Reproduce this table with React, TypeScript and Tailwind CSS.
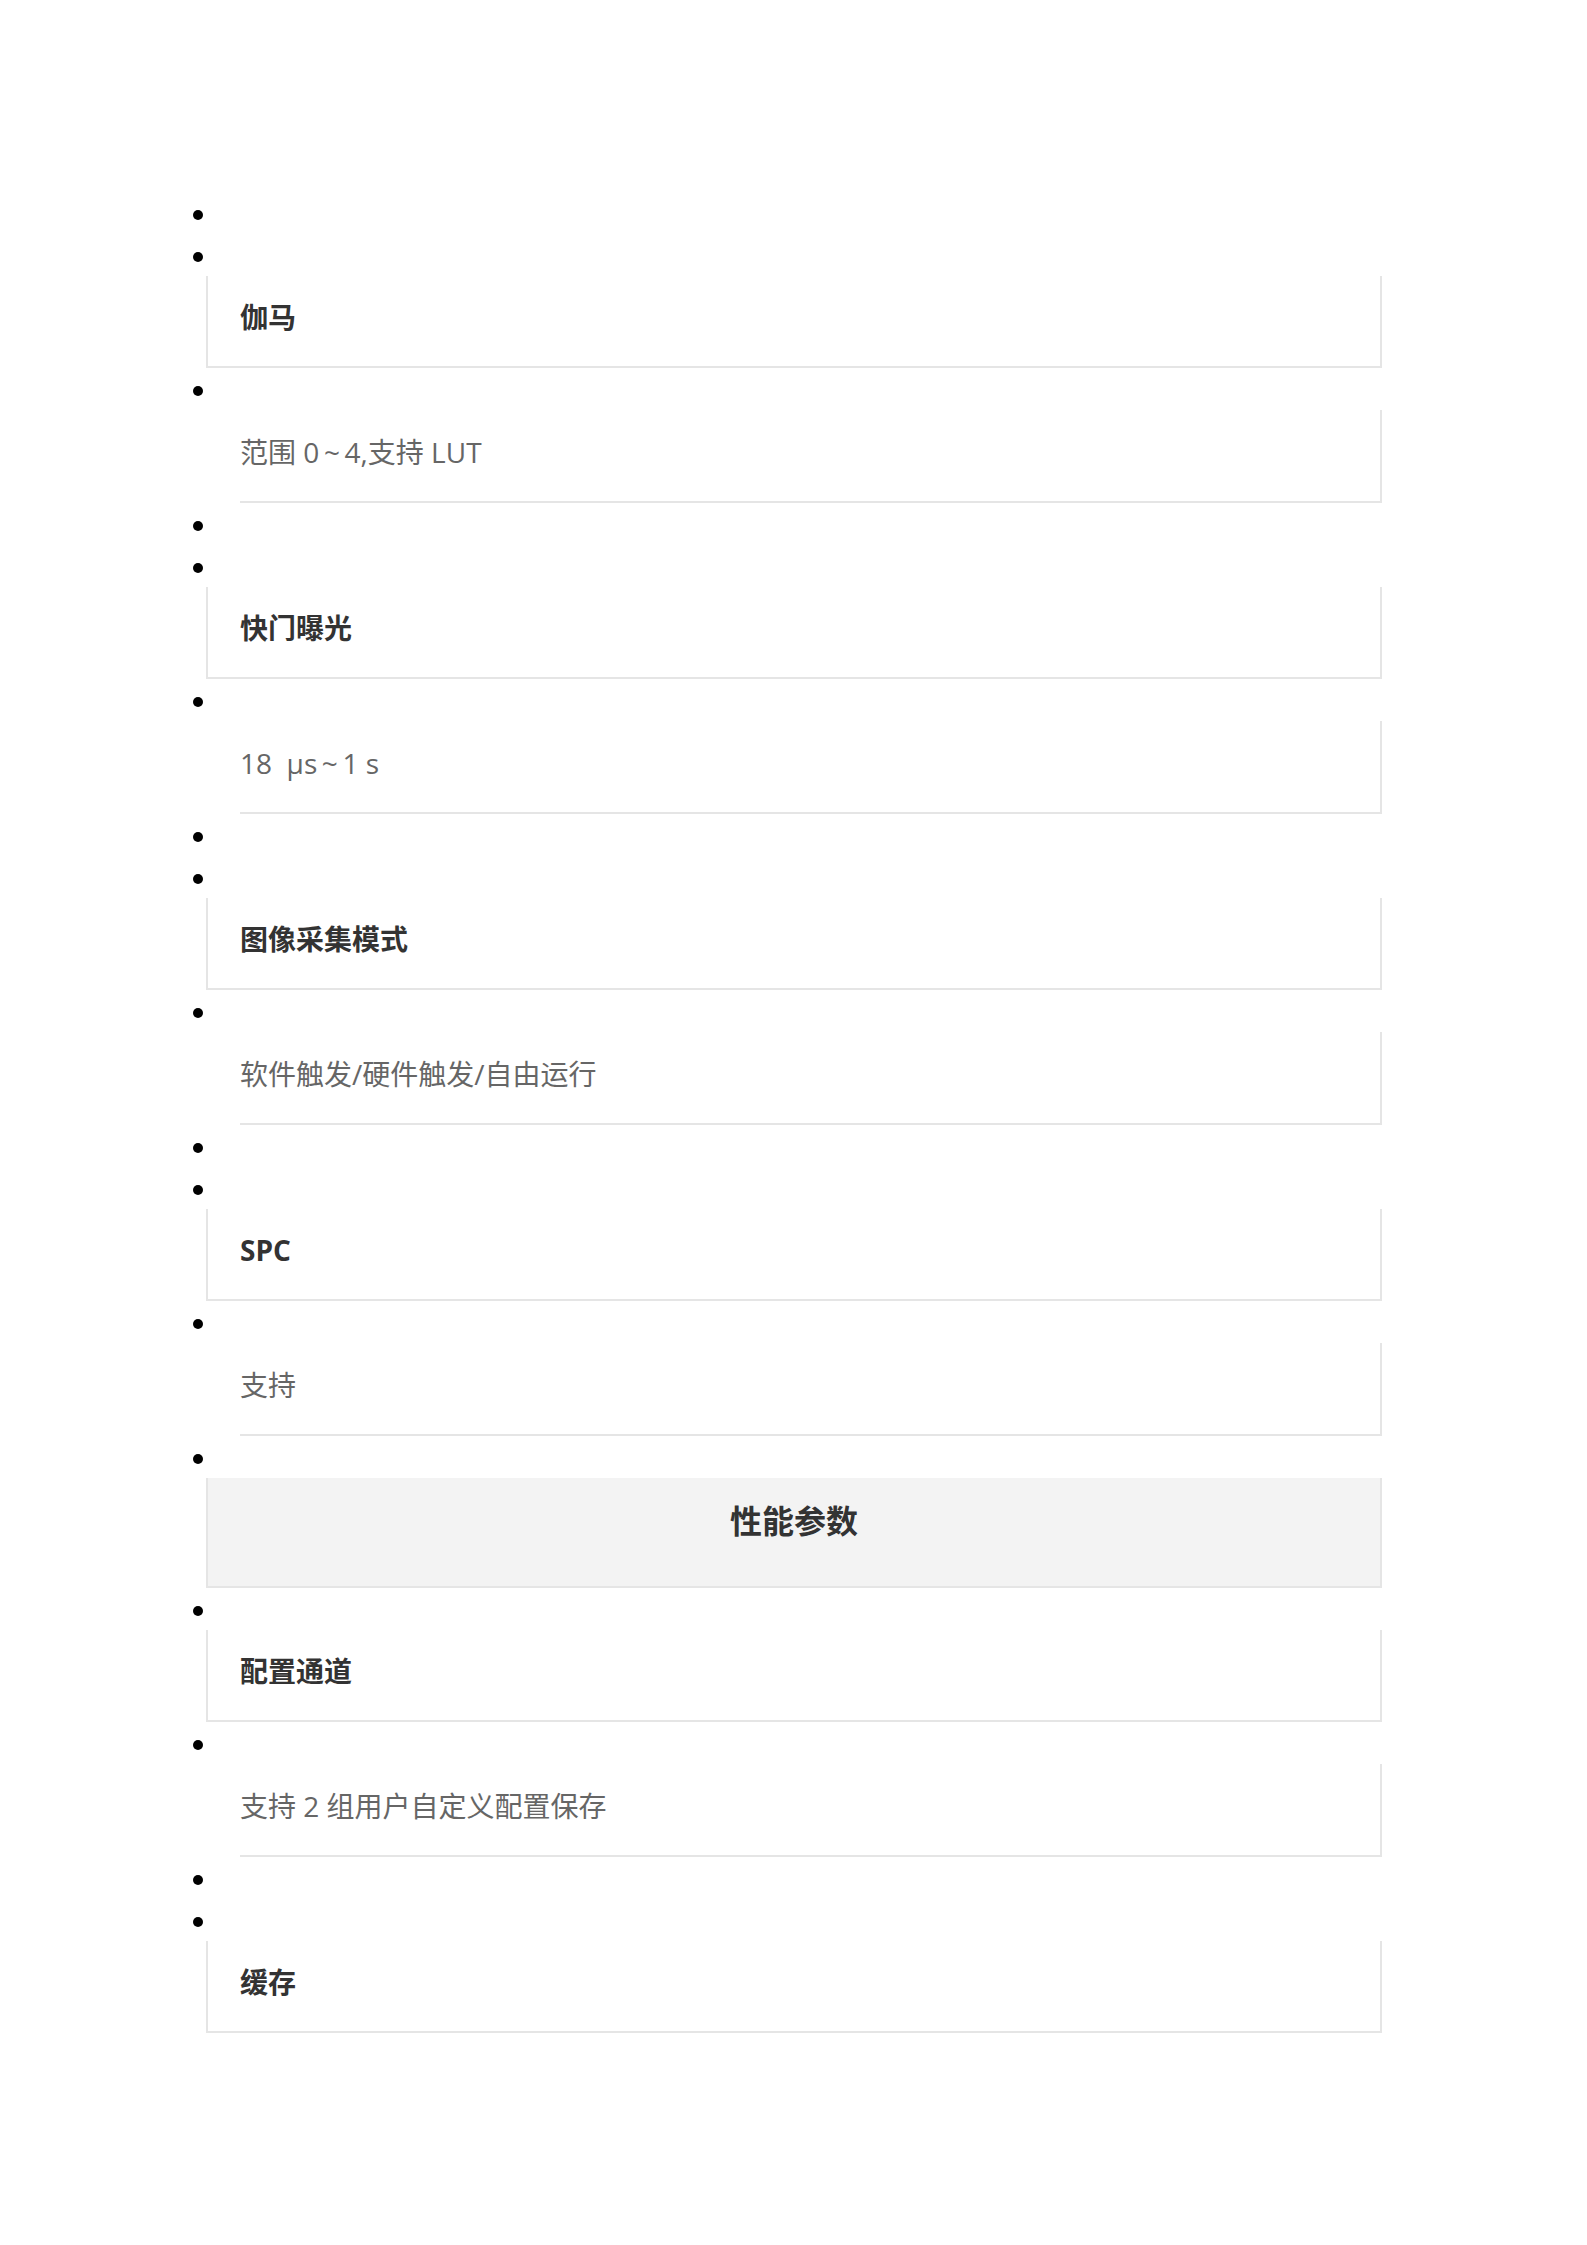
import React from 'react';

type Row =
  | { kind: 'empty' }
  | { kind: 'title'; text: string }
  | { kind: 'value'; text: string }
  | { kind: 'header'; text: string };

const rows: Row[] = [
  { kind: 'empty' },
  { kind: 'title', text: '伽马' },
  { kind: 'value', text: '范围 0\u2009~\u20094,支持 LUT' },
  { kind: 'empty' },
  { kind: 'title', text: '快门曝光' },
  { kind: 'value', text: '18 \u00a0μs\u2009~\u20091 s' },
  { kind: 'empty' },
  { kind: 'title', text: '图像采集模式' },
  { kind: 'value', text: '软件触发/硬件触发/自由运行' },
  { kind: 'empty' },
  { kind: 'title', text: 'SPC' },
  { kind: 'value', text: '支持' },
  { kind: 'header', text: '性能参数' },
  { kind: 'title', text: '配置通道' },
  { kind: 'value', text: '支持 2 组用户自定义配置保存' },
  { kind: 'empty' },
  { kind: 'title', text: '缓存' },
];

const Bullet: React.FC = () => (
  <div className="h-[42px] pt-[18px]">
    <div className="w-[10px] h-[10px] rounded-full bg-black" />
  </div>
);

const Cell: React.FC<{ row: Row }> = ({ row }) => {
  if (row.kind === 'title') {
    return (
      <div className="ml-[13px] w-[1176px] h-[92px] border-l-2 border-r-2 border-b-2 border-[#e5e5e5] pl-[32px] pt-[27px] text-[28px] leading-[28px] font-bold text-[#333]">
        {row.text}
      </div>
    );
  }
  if (row.kind === 'value') {
    return (
      <div className="ml-[47px] w-[1142px] h-[93px] border-r-2 border-b-2 border-[#e5e5e5] pt-[28px] text-[28px] leading-[28px] text-[#666]">
        {row.text}
      </div>
    );
  }
  if (row.kind === 'header') {
    return (
      <div className="ml-[13px] w-[1176px] h-[110px] border-l-2 border-r-2 border-b-2 border-[#e5e5e5] bg-[#f3f3f3] pt-[27px] text-center text-[32px] leading-[32px] font-bold text-[#333]">
        {row.text}
      </div>
    );
  }
  return null;
};

export default function App() {
  return (
    <div className="min-h-[2245px] bg-white pt-[192px] font-['Open_Sans','Noto_Sans_CJK_SC',sans-serif]">
      <ul className="pl-[193px]">
        {rows.map((row, i) => (
          <li key={i}>
            <Bullet />
            <Cell row={row} />
          </li>
        ))}
      </ul>
    </div>
  );
}
